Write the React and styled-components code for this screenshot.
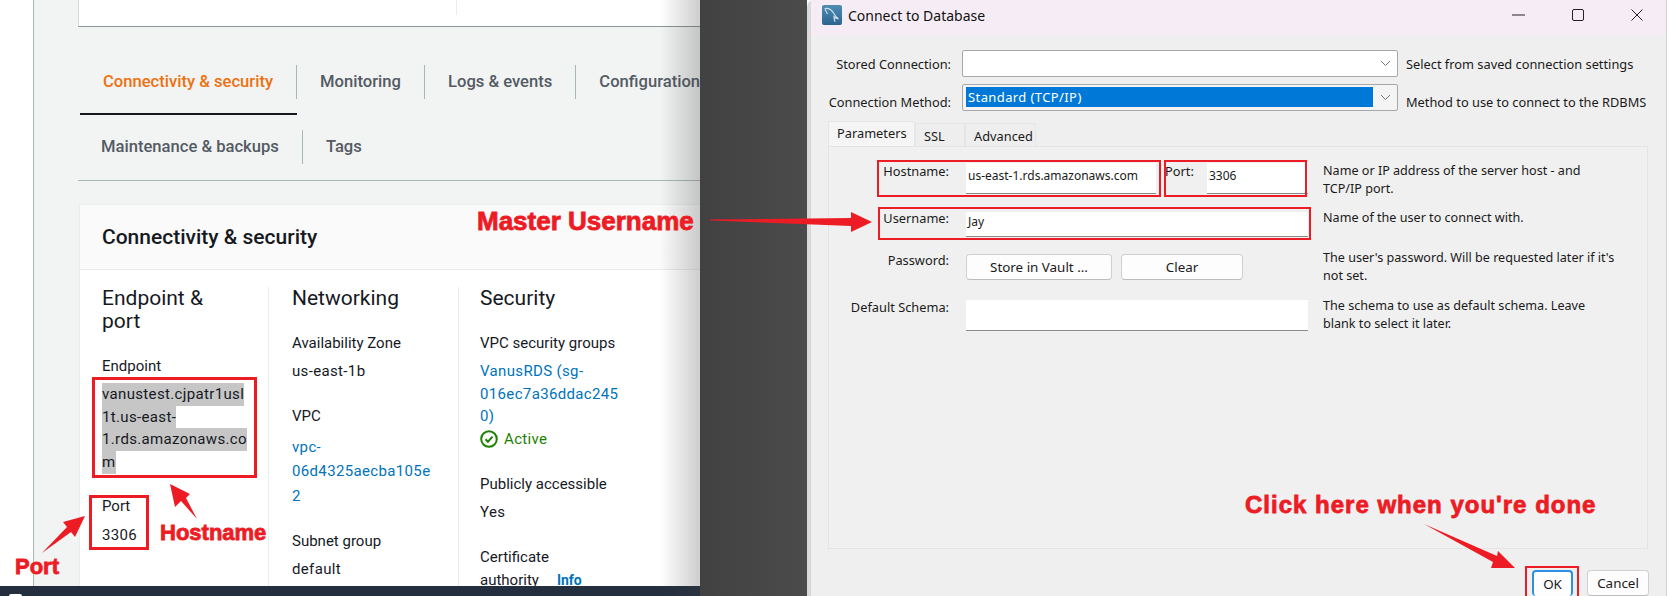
import React from 'react';
import styled, { createGlobalStyle } from 'styled-components';

const GlobalStyle = createGlobalStyle`
  html, body { margin: 0; padding: 0; background: #fff; }
  * { box-sizing: border-box; }
`;

const Page = styled.div`
  position: relative;
  display: flex;
  width: 1669px;
  height: 596px;
  overflow: hidden;
`;

/* ---- AWS console side ---- */
const Console = styled.div`
  position: relative;
  flex: 0 0 700px;
  width: 700px;
  min-width: 0;
  overflow: hidden;
  display: flex;
  flex-direction: column;
  font-family: Roboto, "Liberation Sans", sans-serif;
  font-size: 15px;
  color: #16191f;
  &::after {
    content: '';
    position: absolute;
    top: 0;
    right: 0;
    bottom: 0;
    width: 40px;
    background: linear-gradient(to right, rgba(60, 60, 60, 0), rgba(60, 60, 60, 0.25));
  }
`;
const ConsoleBody = styled.div`
  flex: 1;
  min-height: 0;
  overflow: hidden;
  margin-left: 33px;
  padding-left: 44px;
  background: #f2f3f3;
  border-left: 1px solid #aab7b8;
`;
const ConsoleFooter = styled.div`
  flex: 0 0 10px;
  background: #232f3e;
  padding: 8px 0 0 9px;
`;
const FooterChip = styled.div`
  width: 13px;
  height: 2px;
  border-radius: 2px 2px 0 0;
  background: #fff;
`;
const TopCard = styled.div`
  height: 27px;
  background: #fff;
  border-left: 1px solid #d5dbdb;
  border-bottom: 1px solid #879596;
  padding-left: 377px;
`;
const TopCardRule = styled.div`
  width: 1px;
  height: 15px;
  background: #eaeded;
`;
const TabRow = styled.div`
  display: flex;
  margin-top: ${p => p.$top}px;
  padding-left: ${p => p.$inset || 0}px;
`;
const Tab = styled.div`
  position: relative;
  height: 34px;
  line-height: 34px;
  padding: 0 23px;
  white-space: nowrap;
  font-size: 16.6px;
  font-weight: 500;
  color: ${p => (p.$active ? '#ec7211' : '#545b64')};
  border-right: ${p => (p.$last ? 'none' : '1px solid #aab7b8')};
  &::after {
    content: '';
    display: ${p => (p.$active ? 'block' : 'none')};
    position: absolute;
    left: 0;
    right: -1px;
    top: 48px;
    height: 2px;
    background: #16191f;
  }
`;
const TabRule = styled.div`
  height: 17px;
  border-bottom: 1px solid #aab7b8;
`;
const Card = styled.div`
  margin: 23px 0 0 1px;
  background: #fff;
  border-top: 1px solid #eaeded;
  border-left: 1px solid #eaeded;
  height: 400px;
`;
const CardHeader = styled.div`
  height: 65px;
  padding: 0 0 0 22px;
  line-height: 65px;
  background: #fafafa;
  border-bottom: 1px solid #eaeded;
  font-size: 21px;
  font-weight: 500;
`;
const Columns = styled.div`
  display: grid;
  grid-template-columns: 188px 190px 1fr;
  padding-top: 17px;
`;
const Column = styled.div`
  padding-left: ${p => p.$inset}px;
  height: 300px;
  border-left: ${p => (p.$rule ? '1px solid #eaeded' : 'none')};
`;
const ColumnTitle = styled.h3`
  margin: 0;
  font-size: 21px;
  font-weight: 400;
  line-height: 23px;
`;
const Group = styled.div`
  margin-top: ${p => p.$top || 22}px;
`;
const Label = styled.div`
  line-height: ${p => p.$lh || 22}px;
`;
const Value = styled.div`
  margin-top: ${p => p.$gap || 6}px;
  line-height: ${p => p.$lh || 22.7}px;
  letter-spacing: 0.35px;
  white-space: nowrap;
  color: ${p => (p.$link ? '#0073bb' : 'inherit')};
`;
const Selected = styled.span`
  display: block;
  width: fit-content;
  height: 22.7px;
  background: #c6c6c6;
`;
const StatusLine = styled.div`
  display: flex;
  align-items: center;
  gap: 6px;
  height: 22.7px;
  letter-spacing: 0.35px;
  color: #1d8102;
`;
const InfoLink = styled.span`
  margin-left: 18px;
  font-size: 14px;
  font-weight: 700;
  color: #0073bb;
`;

/* ---- dark gap between the two windows ---- */
const Gap = styled.div`
  flex: 0 0 107px;
  background: linear-gradient(to right, #414141, #4b4b4b);
`;

/* ---- MySQL Workbench dialog ---- */
const Dialog = styled.div`
  flex: 1;
  min-width: 0;
  display: flex;
  flex-direction: column;
  margin-right: 2px;
  background: #efefef;
  border-left: 4px solid #d9d9d9;
  border-right: 1px solid #d0d0d0;
  border-top-left-radius: 7px;
  font-family: "Noto Sans", "Liberation Sans", sans-serif;
  font-size: 12.8px;
  color: #1a1a1a;
`;
const TitleBar = styled.div`
  flex: 0 0 35px;
  display: flex;
  align-items: center;
  padding: 0 0 5px 11px;
  background: #f6ecf5;
  font-size: 14px;
  color: #111;
`;
const TitleText = styled.span`
  margin-left: 6px;
  flex: 1;
`;
const WindowButton = styled.div`
  width: 59px;
  display: flex;
  justify-content: center;
`;
const Form = styled.div`
  padding-top: 15px;
`;
const FormRow = styled.div`
  display: grid;
  grid-template-columns: 143px 436px 1fr;
  column-gap: 8px;
  align-items: center;
  height: 27px;
  margin-bottom: 6px;
`;
const RowLabel = styled.div`
  text-align: right;
  margin-right: 3px;
  padding-top: ${p => p.$drop || 0}px;
`;
const RowHint = styled.div`
  padding-top: ${p => p.$drop || 0}px;
`;
const Combo = styled.div`
  display: flex;
  align-items: center;
  height: 27px;
  padding: 2px 0 2px 3px;
  background: ${p => (p.$plain ? '#fff' : '#f4f4f4')};
  border: 1px solid #a8a8a8;
  border-radius: 2px;
`;
const ComboValue = styled.div`
  flex: 1;
  height: 20px;
  line-height: 20px;
  padding-left: 2px;
  font-size: 13px;
  letter-spacing: 0.4px;
  color: #fff;
  background: ${p => (p.$selected ? '#0078d7' : 'transparent')};
`;
const ComboArrow = styled.div`
  flex: 0 0 24px;
  display: flex;
  justify-content: center;
`;
const TabStrip = styled.div`
  display: flex;
  align-items: flex-end;
  height: 25px;
  margin: 11px 0 0 17px;
`;
const DialogTab = styled.div`
  height: ${p => (p.$active ? 25 : 23)}px;
  width: ${p => p.$w}px;
  padding-left: 8px;
  line-height: ${p => (p.$active ? 23 : 24)}px;
  background: ${p => (p.$active ? '#f5f5f5' : '#eeeeee')};
  border: 1px solid #e6e6e6;
  border-bottom: none;
`;
const Pane = styled.div`
  height: 403px;
  margin: 0 18px 0 17px;
  padding: 16px 0 0 0;
  background: #f0f0f0;
  border: 1px solid #e4e4e4;
`;
const PaneRow = styled.div`
  display: grid;
  grid-template-columns: 120px 342px 1fr;
  column-gap: 17px;
  height: ${p => p.$h}px;
  margin-bottom: ${p => p.$mb || 0}px;
`;
const PaneLabel = styled.div`
  text-align: right;
  margin-top: ${p => p.$offset || 0}px;
  line-height: 16px;
`;
const HostPair = styled.div`
  display: flex;
`;
const Input = styled.div`
  height: ${p => p.$h || 31}px;
  width: ${p => (p.$w ? `${p.$w}px` : '100%')};
  padding: 0 2px;
  line-height: ${p => (p.$h || 31) - 5}px;
  font-size: 12px;
  white-space: nowrap;
  background: #fff;
  border-bottom: 1px solid #8a8a8a;
`;
const PortLabel = styled.div`
  width: 51px;
  padding-left: 9px;
  line-height: 16px;
`;
const Hint = styled.div`
  margin: ${p => p.$offset || 0}px 0 0 -2px;
  line-height: 18px;
  font-size: 12.6px;
  white-space: nowrap;
`;
const ButtonRow = styled.div`
  display: flex;
  gap: 9px;
`;
const Button = styled.div`
  height: 26px;
  width: ${p => p.$w}px;
  line-height: 24px;
  text-align: center;
  font-size: 13.4px;
  background: #fdfdfd;
  border: ${p => (p.$primary ? '2px solid #2d8fe0' : '1px solid #d0d0d0')};
  border-bottom: ${p => (p.$primary ? 'none' : '1px solid #bdbdbd')};
  border-radius: 4px;
`;
const Footer = styled.div`
  display: flex;
  justify-content: flex-end;
  gap: 14px;
  margin-top: 21px;
  padding-right: 17px;
`;

/* ---- red annotations drawn on top of the screenshot ---- */
const Overlay = styled.svg`
  position: absolute;
  inset: 0;
  pointer-events: none;
`;
const Note = styled.div`
  position: absolute;
  left: ${p => p.$x}px;
  top: ${p => p.$y}px;
  font-family: "Liberation Sans", Arial, sans-serif;
  font-weight: 700;
  font-size: ${p => p.$fs}px;
  line-height: 1;
  letter-spacing: ${p => p.$ls || 0}px;
  white-space: nowrap;
  color: #ed1c24;
  -webkit-text-stroke: 0.8px #ed1c24;
`;

const boxes = [
  [93.5, 378.5, 162, 98, 3],
  [90.5, 496.5, 57, 52, 3],
  [878, 161, 282, 35, 2],
  [1165, 161, 141, 35, 2],
  [879, 208, 431, 31, 2],
  [1526, 567, 52, 31, 2],
];

const arrows = [
  '710,219.5 851,218 851,212 872,222 851,232 851,226 710,220.5',
  '170,484 190,494 186,498 197,519 181,501 175,507',
  '85,516 63,522 67,527 42,553 71,532 75,537',
  '1424,524 1497,556 1498,551 1515,568 1491,568 1493,562',
];

function Chevron() {
  return (
    <svg width="11" height="7" viewBox="0 0 11 7">
      <path d="M1 1l4.500 4.500L10 1" fill="none" stroke="#777" strokeWidth="1" />
    </svg>
  );
}

function MysqlIcon() {
  return (
    <svg width="20" height="20" viewBox="0 0 20 20">
      <defs>
        <linearGradient id="mysql-bg" x1="0" y1="0" x2="0" y2="1">
          <stop offset="0" stopColor="#4f8db5" />
          <stop offset="1" stopColor="#2a648f" />
        </linearGradient>
      </defs>
      <rect width="20" height="20" rx="2" fill="url(#mysql-bg)" />
      <path
        d="M3 3.500C6 3 9.500 4.500 11.500 8c1.200 2.200 2.500 4 5 6-1.800-.4-3.300-1.200-4.500-2.300 0 1.800.3 3.300 1 5M3 3.500c.5 2.500 1.500 4 2.500 5.500"
        fill="none"
        stroke="#cfdde8"
        strokeWidth="1.200"
      />
    </svg>
  );
}

function ActiveIcon() {
  return (
    <svg width="18" height="18" viewBox="0 0 18 18">
      <circle cx="9" cy="9" r="7.800" fill="none" stroke="#1d8102" strokeWidth="2" />
      <path d="M5.500 9.200l2.500 2.500 4.500-5" fill="none" stroke="#1d8102" strokeWidth="2" />
    </svg>
  );
}

export default function App() {
  return (
    <Page>
      <GlobalStyle />
      <Console>
        <ConsoleBody>
          <TopCard>
            <TopCardRule />
          </TopCard>
          <TabRow $top={38} $inset={2}>
            <Tab $active>Connectivity &amp; security</Tab>
            <Tab>Monitoring</Tab>
            <Tab>Logs &amp; events</Tab>
            <Tab $last>Configuration</Tab>
          </TabRow>
          <TabRow $top={31}>
            <Tab>Maintenance &amp; backups</Tab>
            <Tab $last>Tags</Tab>
          </TabRow>
          <TabRule />
          <Card>
            <CardHeader>Connectivity &amp; security</CardHeader>
            <Columns>
              <Column $inset={22}>
                <ColumnTitle>
                  Endpoint &amp;
                  <br />
                  port
                </ColumnTitle>
                <Group>
                  <Label>Endpoint</Label>
                  <Value>
                    <Selected>vanustest.cjpatr1usl</Selected>
                    <Selected>1t.us-east-</Selected>
                    <Selected>1.rds.amazonaws.co</Selected>
                    <Selected>m</Selected>
                  </Value>
                </Group>
                <Group $top={21}>
                  <Label>Port</Label>
                  <Value $gap={7}>3306</Value>
                </Group>
              </Column>
              <Column $rule $inset={23}>
                <ColumnTitle>Networking</ColumnTitle>
                <Group>
                  <Label>Availability Zone</Label>
                  <Value>us-east-1b</Value>
                </Group>
                <Group>
                  <Label>VPC</Label>
                  <Value $link $lh={24.5} $gap={8}>
                    vpc-
                    <br />
                    06d4325aecba105e
                    <br />2
                  </Value>
                </Group>
                <Group>
                  <Label>Subnet group</Label>
                  <Value>default</Value>
                </Group>
              </Column>
              <Column $rule $inset={21}>
                <ColumnTitle>Security</ColumnTitle>
                <Group>
                  <Label>VPC security groups</Label>
                  <Value $link>
                    VanusRDS (sg-
                    <br />
                    016ec7a36ddac245
                    <br />
                    0)
                  </Value>
                  <StatusLine>
                    <ActiveIcon />
                    Active
                  </StatusLine>
                </Group>
                <Group>
                  <Label>Publicly accessible</Label>
                  <Value>Yes</Value>
                </Group>
                <Group>
                  <Label>Certificate</Label>
                  <Label $lh={25}>
                    authority<InfoLink>Info</InfoLink>
                  </Label>
                </Group>
              </Column>
            </Columns>
          </Card>
        </ConsoleBody>
        <ConsoleFooter>
          <FooterChip />
        </ConsoleFooter>
      </Console>
      <Gap />
      <Dialog>
        <TitleBar>
          <MysqlIcon />
          <TitleText>Connect to Database</TitleText>
          <WindowButton>
            <svg width="13" height="2" viewBox="0 0 13 2">
              <path d="M0 1h13" stroke="#222" strokeWidth="1" />
            </svg>
          </WindowButton>
          <WindowButton>
            <svg width="12" height="12" viewBox="0 0 12 12">
              <rect x=".5" y=".5" width="11" height="11" rx="1.500" fill="none" stroke="#222" />
            </svg>
          </WindowButton>
          <WindowButton>
            <svg width="12" height="12" viewBox="0 0 12 12">
              <path d="M.5.5l11 11M11.500.5l-11 11" stroke="#222" />
            </svg>
          </WindowButton>
        </TitleBar>
        <Form>
          <FormRow>
            <RowLabel>Stored Connection:</RowLabel>
            <Combo $plain>
              <ComboValue />
              <ComboArrow>
                <Chevron />
              </ComboArrow>
            </Combo>
            <RowHint>Select from saved connection settings</RowHint>
          </FormRow>
          <FormRow>
            <RowLabel $drop={10}>Connection Method:</RowLabel>
            <Combo>
              <ComboValue $selected>Standard (TCP/IP)</ComboValue>
              <ComboArrow>
                <Chevron />
              </ComboArrow>
            </Combo>
            <RowHint $drop={9}>Method to use to connect to the RDBMS</RowHint>
          </FormRow>
          <TabStrip>
            <DialogTab $active $w={87}>Parameters</DialogTab>
            <DialogTab $w={50}>SSL</DialogTab>
            <DialogTab $w={71}>Advanced</DialogTab>
          </TabStrip>
          <Pane>
            <PaneRow $h={31} $mb={18}>
              <PaneLabel>Hostname:</PaneLabel>
              <HostPair>
                <Input $w={190}>us-east-1.rds.amazonaws.com</Input>
                <PortLabel>Port:</PortLabel>
                <Input $w={101}>3306</Input>
              </HostPair>
              <Hint $offset={-1.5}>
                Name or IP address of the server host - and
                <br />
                TCP/IP port.
              </Hint>
            </PaneRow>
            <PaneRow $h={25} $mb={17}>
              <PaneLabel $offset={-2}>Username:</PaneLabel>
              <Input $h={25}>Jay</Input>
              <Hint $offset={-3}>Name of the user to connect with.</Hint>
            </PaneRow>
            <PaneRow $h={30} $mb={16}>
              <PaneLabel $offset={-2}>Password:</PaneLabel>
              <ButtonRow>
                <Button $w={146}>Store in Vault ...</Button>
                <Button $w={122}>Clear</Button>
              </ButtonRow>
              <Hint $offset={-5}>
                The user's password. Will be requested later if it's
                <br />
                not set.
              </Hint>
            </PaneRow>
            <PaneRow $h={31}>
              <PaneLabel $offset={-1}>Default Schema:</PaneLabel>
              <Input />
              <Hint $offset={-3.5}>
                The schema to use as default schema. Leave
                <br />
                blank to select it later.
              </Hint>
            </PaneRow>
          </Pane>
          <Footer>
            <Button $primary $w={41}>OK</Button>
            <Button $w={62}>Cancel</Button>
          </Footer>
        </Form>
      </Dialog>
      <Overlay width="1669" height="596" viewBox="0 0 1669 596">
        {boxes.map(([x, y, w, h, sw]) => (
          <rect key={`${x}-${y}`} x={x} y={y} width={w} height={h} fill="none" stroke="#ed1c24" strokeWidth={sw} />
        ))}
        {arrows.map(points => (
          <polygon key={points} points={points} fill="#ed1c24" />
        ))}
      </Overlay>
      <Note $x={477} $y={208} $fs={26}>Master Username</Note>
      <Note $x={160} $y={522} $fs={22}>Hostname</Note>
      <Note $x={15} $y={556} $fs={22}>Port</Note>
      <Note $x={1245} $y={493} $fs={24} $ls={1}>Click here when you're done</Note>
    </Page>
  );
}
